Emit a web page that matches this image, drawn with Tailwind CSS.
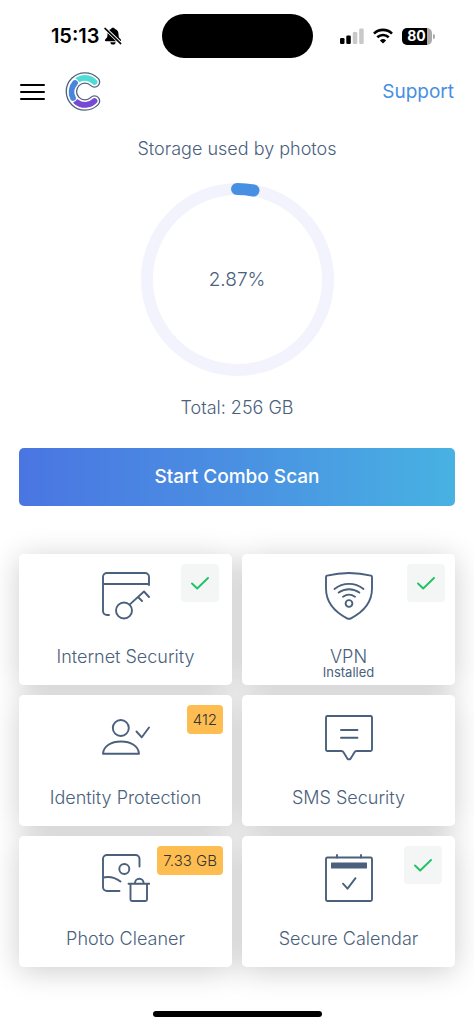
<!DOCTYPE html>
<html lang="en">
<head>
<meta charset="utf-8">
<meta name="viewport" content="width=device-width, initial-scale=1">
<title>Storage used by photos</title>
<script src="https://cdn.jsdelivr.net/npm/@tailwindcss/browser@4"></script>
</head>
<body class="bg-white font-['Inter','Liberation_Sans',sans-serif] text-[#4a607c]">
<div class="flex min-h-screen flex-col">
  <!-- Status bar -->
  <div class="grid grid-cols-[1fr_auto_1fr] items-center pt-[14px] text-black">
    <div class="flex items-center justify-end gap-1 pr-10">
      <span class="text-[20px] leading-6 font-semibold">15:13</span>
      <svg class="size-[18px]" viewBox="0 0 18 18" aria-label="Silent">
        <path d="M9 .8c-1 0-1.700.5-1.900 1.200C4.500 2.800 3.500 5 3.500 7.200c0 3-.8 3.800-1.900 4.900-.5.500-.8 1-.7 1.500.1.500.5.700 1.100.7h14c.6 0 1-.2 1.100-.7.100-.5-.2-1-.7-1.500-1.100-1.100-1.900-1.900-1.900-4.900 0-2.200-1-4.400-3.600-5.200C10.700 1.300 10 .8 9 .8zM6.400 15.200a2.600 2.400 0 0 0 5.200 0z"/>
        <path d="M1.200 1.500l15.600 15" stroke="#fff" stroke-width="3.200"/>
        <path d="M1 1.400l15.700 15.200" stroke="#000" stroke-width="1.500" stroke-linecap="round"/>
      </svg>
    </div>
    <div class="h-11 w-[151px] rounded-full bg-black"></div>
    <div class="flex items-center gap-[9px] pl-[27px]">
      <svg class="h-4 w-6" viewBox="0 0 24 16" aria-label="Signal">
        <rect x="0" y="10" width="4.500" height="6" rx="1.200"/>
        <rect x="6.300" y="7.500" width="4.500" height="8.500" rx="1.200"/>
        <g fill="#c9c9c9"><rect x="12.800" y="4" width="4.500" height="12" rx="1.200"/><rect x="19.200" y="0.500" width="4.500" height="15.500" rx="1.200"/></g>
      </svg>
      <svg class="h-4 w-5" viewBox="0 0 20 16" fill="none" stroke="#000" stroke-width="2.600" aria-label="Wi-Fi">
        <path d="M1 5.600a12.800 12.800 0 0 1 18 0M4.300 9.300a8.200 8.200 0 0 1 11.400 0"/>
        <path d="M10 15.600L6.900 12.400a4.500 4.500 0 0 1 6.200 0z" fill="#000" stroke="none"/>
      </svg>
      <div class="flex items-center gap-px">
        <div class="flex h-[17px] w-[30px] items-center justify-center rounded-[5px] bg-linear-to-r from-black from-82% to-[#aaa] to-82% text-[14px] leading-4 font-bold text-white">80</div>
        <div class="h-[5px] w-[2px] rounded-r-full bg-[#aaa]"></div>
      </div>
    </div>
  </div>

  <!-- Header -->
  <header class="mt-3 flex items-center px-5">
    <button type="button" aria-label="Menu" class="flex w-[25px] flex-col gap-[5px]">
      <span class="h-[2px] rounded-full bg-black"></span>
      <span class="h-[2px] rounded-full bg-black"></span>
      <span class="h-[2px] rounded-full bg-black"></span>
    </button>
    <svg class="ml-5 h-11 w-9" viewBox="0 0 36 44" fill="none" stroke-linecap="round" aria-label="Combo logo">
      <path d="M29.500 12A13.500 13.500 0 1 0 29.500 31" stroke="#50617d" stroke-width="11.600"/>
      <path d="M29.500 12A13.500 13.500 0 1 0 29.500 31" stroke="#fff" stroke-width="9"/>
      <path d="M13.500 9.500A13.500 13.500 0 0 1 29.500 12" stroke="#4fdcd6" stroke-width="5.800"/>
      <path d="M29.500 31A13.500 13.500 0 0 1 11.500 32" stroke="#7648d4" stroke-width="5.800"/>
      <path d="M8 28A13.500 13.500 0 0 1 10 13" stroke="#fff" stroke-width="7.800"/>
      <path d="M8 28A13.500 13.500 0 0 1 10 13" stroke="#4786dc" stroke-width="5.800"/>
    </svg>
    <a href="#" class="ml-auto text-[19px] leading-6 text-[#478fe3]">Support</a>
  </header>

  <main class="flex flex-col px-[19px]">
    <!-- Storage gauge -->
    <section class="flex flex-col items-center text-[18px] leading-6 font-[350]">
      <h1 class="mt-[23px] font-[350]">Storage used by photos</h1>
      <div class="mt-[21px] grid place-items-center">
        <svg class="col-start-1 row-start-1 size-[195px]" viewBox="0 0 195 195" fill="none" stroke-width="12">
          <circle cx="97.500" cy="97.500" r="90.500" stroke="#f3f3fd"/>
          <path d="M97 7A90.500 90.500 0 0 1 113.500 8.500" stroke="#478fe3" stroke-linecap="round"/>
        </svg>
        <span class="col-start-1 row-start-1 text-[19px]">2.87%</span>
      </div>
      <p class="mt-[19px]">Total: 256 GB</p>
    </section>

    <button type="button" class="mt-[28px] h-[58px] rounded-[5px] bg-linear-to-r from-[#4a75e2] via-[#4a90e2] to-[#48b2e2] text-[19px] font-medium text-white">Start Combo Scan</button>

    <!-- Feature tiles; shadows sit on a layer below every tile -->
    <section class="isolate mt-12 grid grid-cols-2 gap-[10px] text-[18px] font-[350]">
      <button type="button" class="relative flex h-[131px] flex-col items-center rounded-[5px] bg-white pt-[18px] before:absolute before:inset-0 before:-z-10 before:rounded-[5px] before:shadow-[0_4px_30px_rgba(0,0,0,0.2)]">
        <svg class="size-12" viewBox="0 0 48 48" fill="none" stroke="#4a607c" stroke-width="1.900" stroke-linecap="round" stroke-linejoin="round">
          <path d="M7 43H5a4 4 0 0 1-4-4V5a4 4 0 0 1 4-4h38a4 4 0 0 1 4 4v8M1 12h46"/>
          <circle cx="22" cy="38.500" r="8"/>
          <path d="M27.600 32.600L42 19.500l5 5.500M36 25l4 4"/>
        </svg>
        <span class="mt-7 leading-[18px]">Internet Security</span>
        <span class="absolute top-[10px] right-[13px] grid size-[38px] place-items-center rounded-[4px] bg-[#f4f6f6]">
          <svg class="h-[13px] w-[18px]" viewBox="0 0 18 13" fill="none" stroke="#1fc266" stroke-width="1.900" stroke-linecap="round" stroke-linejoin="round"><path d="M1 6.500l5.200 5L17 1"/></svg>
        </span>
      </button>

      <button type="button" class="relative flex h-[131px] flex-col items-center rounded-[5px] bg-white pt-[18px] before:absolute before:inset-0 before:-z-10 before:rounded-[5px] before:shadow-[0_4px_30px_rgba(0,0,0,0.2)]">
        <svg class="size-12" viewBox="0 0 48 48" fill="none" stroke="#4a607c" stroke-width="1.900" stroke-linecap="round" stroke-linejoin="round">
          <path d="M2 3.700C16 .2 32 .2 46 3.700c.7.200 1 .6 1 1.300v11.500c0 14-9 23.500-21 29.800q-2 1-4 0C10 40 1 30.500 1 16.500V5c0-.7.300-1.100 1-1.300z"/>
          <path d="M9.500 17a23 23 0 0 1 29 0M13.700 20.600a17.500 17.500 0 0 1 20.600 0M18 24.700a10.500 10.500 0 0 1 12 0"/>
          <circle cx="24" cy="31.500" r="3.400"/>
        </svg>
        <span class="mt-7 leading-[18px]">VPN</span>
        <span class="text-[13px] leading-3 font-normal">Installed</span>
        <span class="absolute top-[10px] right-[10px] grid size-[38px] place-items-center rounded-[4px] bg-[#f4f6f6]">
          <svg class="h-[13px] w-[18px]" viewBox="0 0 18 13" fill="none" stroke="#1fc266" stroke-width="1.900" stroke-linecap="round" stroke-linejoin="round"><path d="M1 6.500l5.200 5L17 1"/></svg>
        </span>
      </button>

      <button type="button" class="relative flex h-[131px] flex-col items-center rounded-[5px] bg-white pt-[18px] before:absolute before:inset-0 before:-z-10 before:rounded-[5px] before:shadow-[0_4px_30px_rgba(0,0,0,0.2)]">
        <svg class="size-12" viewBox="0 0 48 48" fill="none" stroke="#4a607c" stroke-width="1.900" stroke-linecap="round" stroke-linejoin="round">
          <circle cx="18.800" cy="15" r="8"/>
          <path d="M1 40.700C1.500 33 9 28.500 19 28.500S36.500 33 37 40.700z"/>
          <path d="M34.500 18.500l5.300 5.800L47 14.500"/>
        </svg>
        <span class="mt-7 leading-[18px]">Identity Protection</span>
        <span class="absolute top-[10px] right-[9px] rounded-[4px] bg-[#febd50] px-[6px] py-[5px] text-[15px] leading-[19px] text-[#333]">412</span>
      </button>

      <button type="button" class="relative flex h-[131px] flex-col items-center rounded-[5px] bg-white pt-[18px] before:absolute before:inset-0 before:-z-10 before:rounded-[5px] before:shadow-[0_4px_30px_rgba(0,0,0,0.2)]">
        <svg class="size-12" viewBox="0 0 48 48" fill="none" stroke="#4a607c" stroke-width="1.900" stroke-linecap="round" stroke-linejoin="round">
          <path d="M2.500 3h43q1.500 0 1.500 1.500v32q0 1.500-1.500 1.500H31.500q-1.300 0-2 1.200L25.700 45.500q-1.700 1.800-3.400 0L18.500 39.200q-.7-1.200-2-1.200H2.500Q1 38 1 36.500v-32Q1 3 2.500 3zM16 17h16.500M16 24.700h16.500"/>
        </svg>
        <span class="mt-7 leading-[18px]">SMS Security</span>
      </button>

      <button type="button" class="relative flex h-[131px] flex-col items-center rounded-[5px] bg-white pt-[18px] before:absolute before:inset-0 before:-z-10 before:rounded-[5px] before:shadow-[0_4px_30px_rgba(0,0,0,0.2)]">
        <svg class="size-12" viewBox="0 0 48 48" fill="none" stroke="#4a607c" stroke-width="1.900" stroke-linecap="round" stroke-linejoin="round">
          <path d="M37.500 12.500V5a4 4 0 0 0-4-4H5a4 4 0 0 0-4 4v28a4 4 0 0 0 4 4h12.500M1 23.500c7-1.500 13 .5 17.500 4"/>
          <circle cx="22.300" cy="15" r="5"/>
          <path d="M26.500 29.700H47.500M28.500 29.700V45.500q0 1.500 1.500 1.500h13.500q1.500 0 1.500-1.500V29.700M33 29a4.300 4.300 0 0 1 8.600 0"/>
        </svg>
        <span class="mt-7 leading-[18px]">Photo Cleaner</span>
        <span class="absolute top-[10px] right-[9px] rounded-[4px] bg-[#febd50] px-[6px] py-[5px] text-[15px] leading-[19px] text-[#333]">7.33 GB</span>
      </button>

      <button type="button" class="relative flex h-[131px] flex-col items-center rounded-[5px] bg-white pt-[18px] before:absolute before:inset-0 before:-z-10 before:rounded-[5px] before:shadow-[0_4px_30px_rgba(0,0,0,0.2)]">
        <svg class="size-12" viewBox="0 0 48 48" fill="none" stroke="#4a607c" stroke-width="1.900" stroke-linecap="round" stroke-linejoin="round">
          <rect x="1" y="3.500" width="46" height="43.500" rx="1.500"/>
          <path d="M12 3.500V1M36 3.500V1M18 29.700l4.500 5 8-10.500"/>
          <rect x="6" y="8.500" width="36" height="6" rx=".5" fill="#4a607c" stroke="none"/>
        </svg>
        <span class="mt-7 leading-[18px]">Secure Calendar</span>
        <span class="absolute top-[10px] right-[13px] grid size-[38px] place-items-center rounded-[4px] bg-[#f4f6f6]">
          <svg class="h-[13px] w-[18px]" viewBox="0 0 18 13" fill="none" stroke="#1fc266" stroke-width="1.900" stroke-linecap="round" stroke-linejoin="round"><path d="M1 6.500l5.200 5L17 1"/></svg>
        </span>
      </button>
    </section>
  </main>

  <div class="mx-auto mt-auto mb-[10px] h-[6px] w-[169px] rounded-full bg-black"></div>
</div>
</body>
</html>
